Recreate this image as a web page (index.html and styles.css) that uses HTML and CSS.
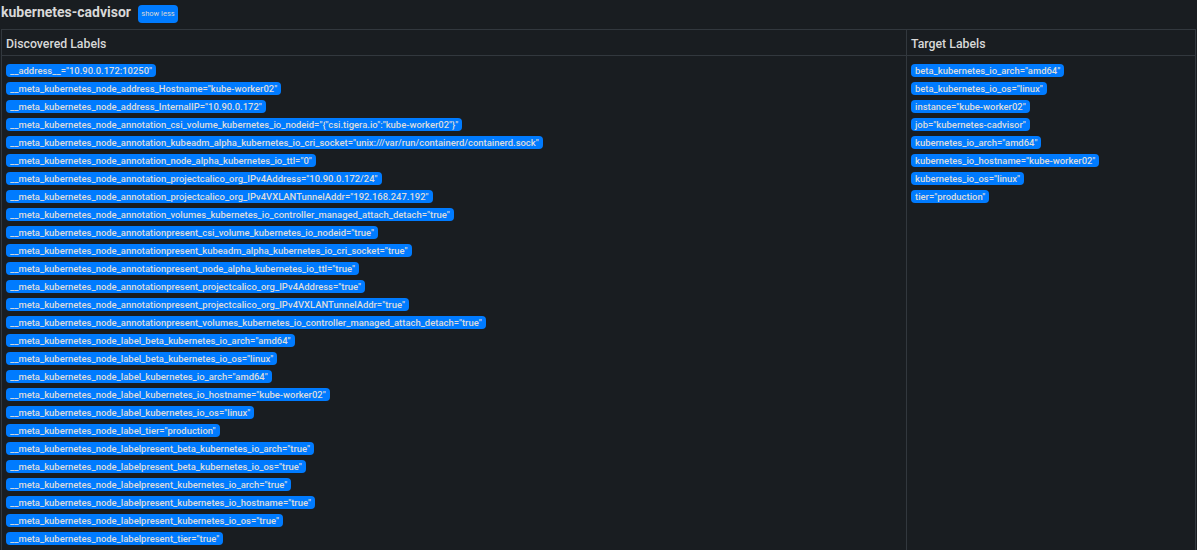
FILE: index.html
```html
<!DOCTYPE html>
<html lang="en">
<head>
<meta charset="utf-8">
<title>kubernetes-cadvisor</title>
<link rel="stylesheet" href="styles.css">
</head>
<body>
<div class="heading">
  <h3 class="title">kubernetes-cadvisor</h3>
  <button class="toggle">show less</button>
</div>
<table class="labels">
  <thead>
    <tr><th class="col-a">Discovered Labels</th><th>Target Labels</th></tr>
  </thead>
  <tbody>
    <tr>
      <td>
        <div class="row"><span class="badge">__address__="10.90.0.172:10250"</span></div>
        <div class="row"><span class="badge">__meta_kubernetes_node_address_Hostname="kube-worker02"</span></div>
        <div class="row"><span class="badge">__meta_kubernetes_node_address_InternalIP="10.90.0.172"</span></div>
        <div class="row"><span class="badge">__meta_kubernetes_node_annotation_csi_volume_kubernetes_io_nodeid="{"csi.tigera.io":"kube-worker02"}"</span></div>
        <div class="row"><span class="badge">__meta_kubernetes_node_annotation_kubeadm_alpha_kubernetes_io_cri_socket="unix:///var/run/containerd/containerd.sock"</span></div>
        <div class="row"><span class="badge">__meta_kubernetes_node_annotation_node_alpha_kubernetes_io_ttl="0"</span></div>
        <div class="row"><span class="badge">__meta_kubernetes_node_annotation_projectcalico_org_IPv4Address="10.90.0.172/24"</span></div>
        <div class="row"><span class="badge">__meta_kubernetes_node_annotation_projectcalico_org_IPv4VXLANTunnelAddr="192.168.247.192"</span></div>
        <div class="row"><span class="badge">__meta_kubernetes_node_annotation_volumes_kubernetes_io_controller_managed_attach_detach="true"</span></div>
        <div class="row"><span class="badge">__meta_kubernetes_node_annotationpresent_csi_volume_kubernetes_io_nodeid="true"</span></div>
        <div class="row"><span class="badge">__meta_kubernetes_node_annotationpresent_kubeadm_alpha_kubernetes_io_cri_socket="true"</span></div>
        <div class="row"><span class="badge">__meta_kubernetes_node_annotationpresent_node_alpha_kubernetes_io_ttl="true"</span></div>
        <div class="row"><span class="badge">__meta_kubernetes_node_annotationpresent_projectcalico_org_IPv4Address="true"</span></div>
        <div class="row"><span class="badge">__meta_kubernetes_node_annotationpresent_projectcalico_org_IPv4VXLANTunnelAddr="true"</span></div>
        <div class="row"><span class="badge">__meta_kubernetes_node_annotationpresent_volumes_kubernetes_io_controller_managed_attach_detach="true"</span></div>
        <div class="row"><span class="badge">__meta_kubernetes_node_label_beta_kubernetes_io_arch="amd64"</span></div>
        <div class="row"><span class="badge">__meta_kubernetes_node_label_beta_kubernetes_io_os="linux"</span></div>
        <div class="row"><span class="badge">__meta_kubernetes_node_label_kubernetes_io_arch="amd64"</span></div>
        <div class="row"><span class="badge">__meta_kubernetes_node_label_kubernetes_io_hostname="kube-worker02"</span></div>
        <div class="row"><span class="badge">__meta_kubernetes_node_label_kubernetes_io_os="linux"</span></div>
        <div class="row"><span class="badge">__meta_kubernetes_node_label_tier="production"</span></div>
        <div class="row"><span class="badge">__meta_kubernetes_node_labelpresent_beta_kubernetes_io_arch="true"</span></div>
        <div class="row"><span class="badge">__meta_kubernetes_node_labelpresent_beta_kubernetes_io_os="true"</span></div>
        <div class="row"><span class="badge">__meta_kubernetes_node_labelpresent_kubernetes_io_arch="true"</span></div>
        <div class="row"><span class="badge">__meta_kubernetes_node_labelpresent_kubernetes_io_hostname="true"</span></div>
        <div class="row"><span class="badge">__meta_kubernetes_node_labelpresent_kubernetes_io_os="true"</span></div>
        <div class="row"><span class="badge">__meta_kubernetes_node_labelpresent_tier="true"</span></div>
      </td>
      <td>
        <div class="row"><span class="badge">beta_kubernetes_io_arch="amd64"</span></div>
        <div class="row"><span class="badge">beta_kubernetes_io_os="linux"</span></div>
        <div class="row"><span class="badge">instance="kube-worker02"</span></div>
        <div class="row"><span class="badge">job="kubernetes-cadvisor"</span></div>
        <div class="row"><span class="badge">kubernetes_io_arch="amd64"</span></div>
        <div class="row"><span class="badge">kubernetes_io_hostname="kube-worker02"</span></div>
        <div class="row"><span class="badge">kubernetes_io_os="linux"</span></div>
        <div class="row"><span class="badge">tier="production"</span></div>
      </td>
    </tr>
  </tbody>
</table>
</body>
</html>
```
FILE: styles.css
```css
* { box-sizing: border-box; }
html, body { height: 100%; }
body {
  margin: 0;
  padding: 0 1px;
  overflow: hidden;
  background: #191d21;
  color: #d8d8d8;
  font-family: Roboto, "Liberation Sans", sans-serif;
  font-size: 14px;
}
.heading {
  display: flex;
  align-items: flex-start;
  gap: 7px;
  height: 29px;
  padding-top: 5px;
}
.title {
  margin: 0;
  font-size: 14px;
  line-height: 14px;
  font-weight: 700;
  color: #d8d8d8;
}
.toggle {
  width: 40px;
  height: 18px;
  padding: 0;
  border: 0;
  border-radius: 4px;
  background: #007bff;
  color: #d8d8d8;
  font: 7.5px/18px Roboto, "Liberation Sans", sans-serif;
  white-space: nowrap;
}
.labels {
  width: 100%;
  table-layout: fixed;
  border-collapse: collapse;
}
.labels th, .labels td {
  border: 1px solid #32383e;
  padding: 0 4px;
  text-align: left;
  vertical-align: top;
}
.labels th {
  height: 26px;
  padding-top: 2px;
  font-size: 12.3px;
  font-weight: 500;
  vertical-align: middle;
}
.col-a { width: 905px; }
.labels td { padding-top: 8px; }
.row {
  display: flex;
  height: 18px;
}
.badge {
  height: 13px;
  padding: 0 4px;
  border-radius: 4px;
  background: #007bff;
  color: #dcdcdc;
  font-size: 9.45px;
  font-weight: 500;
  line-height: 14px;
  white-space: nowrap;
}
```
